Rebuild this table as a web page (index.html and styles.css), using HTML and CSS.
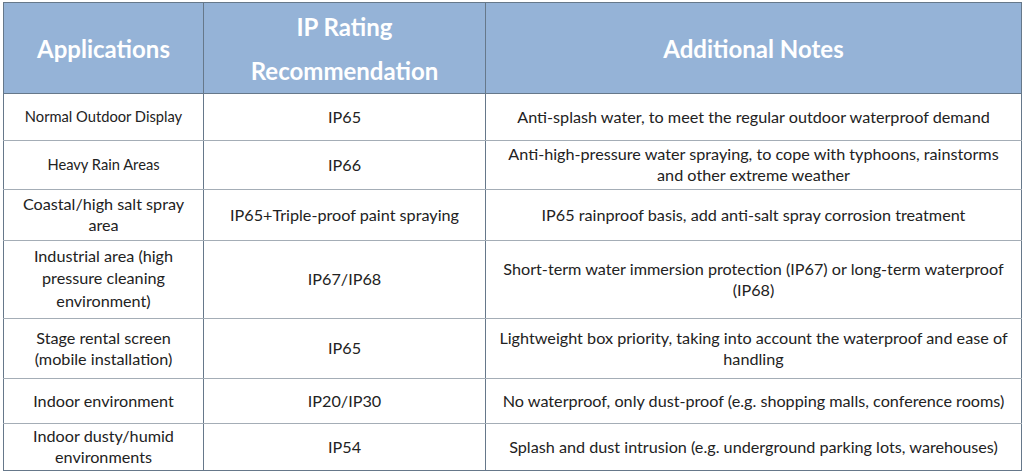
FILE: index.html
```html
<!DOCTYPE html>
<html lang="en">
<head>
<meta charset="utf-8">
<title>IP Rating Recommendation</title>
<link rel="stylesheet" href="styles.css">
</head>
<body>
<table class="ip-table">
  <colgroup>
    <col class="c1"><col class="c2"><col class="c3">
  </colgroup>
  <thead>
    <tr class="head">
      <th>Applications</th>
      <th class="tall">IP Rating<br>Recommendation</th>
      <th>Additional Notes</th>
    </tr>
  </thead>
  <tbody>
    <tr class="r1"><td class="small">Normal Outdoor Display</td><td>IP65</td><td>Anti-splash water, to meet the regular outdoor waterproof demand</td></tr>
    <tr class="r2"><td class="small">Heavy Rain Areas</td><td>IP66</td><td>Anti-high-pressure water spraying, to cope with typhoons, rainstorms<br>and other extreme weather</td></tr>
    <tr class="r3"><td>Coastal/high salt spray<br>area</td><td>IP65+Triple-proof paint spraying</td><td>IP65 rainproof basis, add anti-salt spray corrosion treatment</td></tr>
    <tr class="r4"><td>Industrial area (high<br>pressure cleaning<br>environment)</td><td>IP67/IP68</td><td>Short-term water immersion protection (IP67) or long-term waterproof<br>(IP68)</td></tr>
    <tr class="r5"><td>Stage rental screen<br>(mobile installation)</td><td>IP65</td><td>Lightweight box priority, taking into account the waterproof and ease of<br>handling</td></tr>
    <tr class="r6"><td>Indoor environment</td><td>IP20/IP30</td><td>No waterproof, only dust-proof (e.g. shopping malls, conference rooms)</td></tr>
    <tr class="r7"><td>Indoor dusty/humid<br>environments</td><td>IP54</td><td>Splash and dust intrusion (e.g. underground parking lots, warehouses)</td></tr>
  </tbody>
</table>
</body>
</html>
```
FILE: styles.css
```css
html, body {
  margin: 0;
  padding: 0;
  background: #ffffff;
}
body {
  padding: 2px 3px 0 3px;
  font-family: Lato, "Liberation Sans", sans-serif;
  color: #222222;
}
.ip-table {
  border-collapse: collapse;
  width: 1018px;
  table-layout: fixed;
}
.c1 { width: 200px; }
.c2 { width: 282px; }
.c3 { width: 536px; }
.ip-table th,
.ip-table td {
  padding: 0 2px;
  text-align: center;
  vertical-align: middle;
  white-space: nowrap;
  border-left: 1px solid #66788a;
  border-right: 1px solid #66788a;
  border-top: 1px solid #a4adb6;
  border-bottom: 1px solid #a4adb6;
}
.ip-table thead th {
  background: #95b3d7;
  color: #ffffff;
  font-size: 24px;
  font-weight: 700;
  border-top: 1px solid #66788a;
  border-bottom: 1px solid #66788a;
  line-height: 44px;
  padding-top: 1px;
}
.head { height: 91px; }
.ip-table td {
  font-size: 16.2px;
  line-height: 21px;
  padding-bottom: 2px;
}
.ip-table td.small {
  font-size: 14.7px;
}
.ip-table tbody tr:last-child td {
  border-bottom: 1px solid #66788a;
}
.r1 { height: 47px; }
.r2 { height: 49px; }
.r3 { height: 51px; }
.r4 { height: 78px; }
.r5 { height: 60px; }
.r6 { height: 45px; }
.r7 { height: 47px; }
.r4 td:first-child { line-height: 22.5px; }
```
